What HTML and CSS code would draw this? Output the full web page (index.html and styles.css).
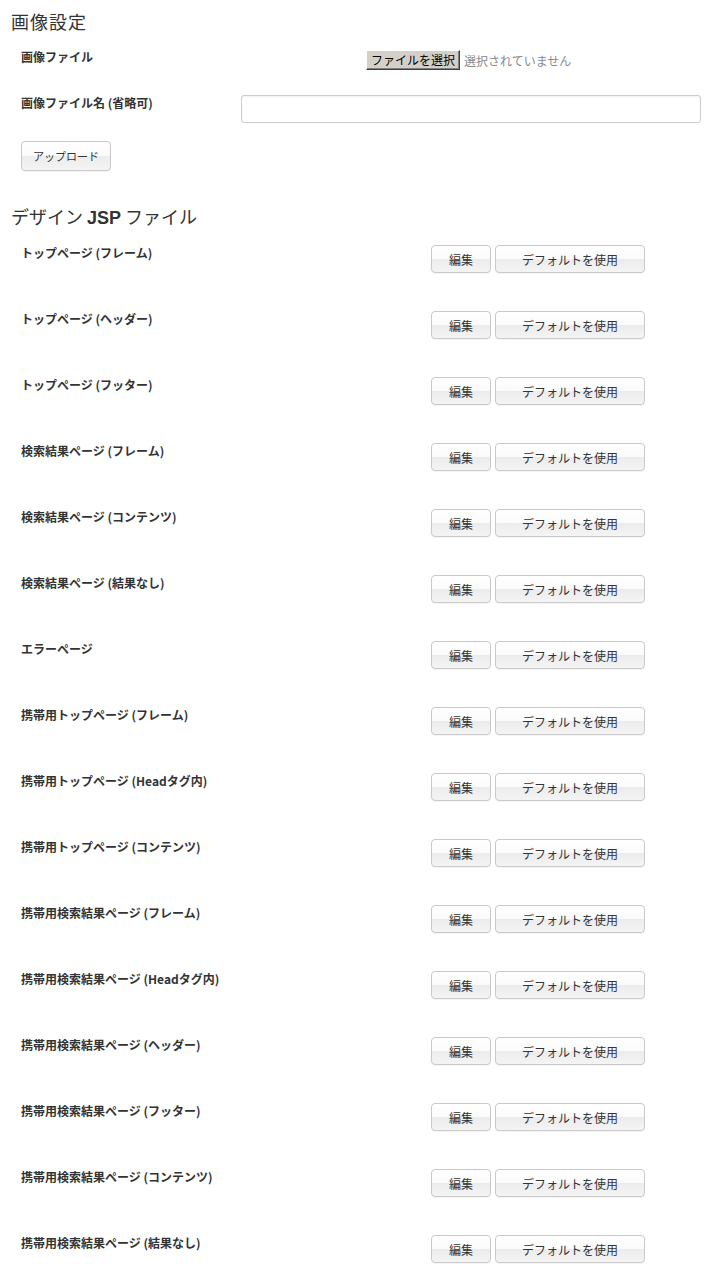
FILE: index.html
```html
<!DOCTYPE html>
<html lang="ja">
<head>
<meta charset="utf-8">
<title>画像設定</title>
<link rel="stylesheet" href="styles.css">
</head>
<body>
<div class="page">
  <section class="block">
    <h2 class="title first-title">画像設定</h2>
    <div class="field-row first">
      <div class="label">画像ファイル</div>
      <div class="file-field">
        <button class="file-btn" type="button">ファイルを選択</button>
        <span class="file-none">選択されていません</span>
      </div>
    </div>
    <div class="field-row second">
      <div class="label">画像ファイル名 (省略可)</div>
      <input class="text-input" type="text">
    </div>
    <div class="field-row third">
      <button class="btn btn-upload" type="button">アップロード</button>
    </div>
  </section>

  <section class="block">
    <h2 class="title jsp-title">デザイン <b>JSP</b> ファイル</h2>
    <div class="jsp-list">
      <div class="jsp-row"><div class="jsp-label">トップページ (フレーム)</div><div class="actions"><button class="btn btn-edit">編集</button><button class="btn btn-default">デフォルトを使用</button></div></div>
      <div class="jsp-row"><div class="jsp-label">トップページ (ヘッダー)</div><div class="actions"><button class="btn btn-edit">編集</button><button class="btn btn-default">デフォルトを使用</button></div></div>
      <div class="jsp-row"><div class="jsp-label">トップページ (フッター)</div><div class="actions"><button class="btn btn-edit">編集</button><button class="btn btn-default">デフォルトを使用</button></div></div>
      <div class="jsp-row"><div class="jsp-label">検索結果ページ (フレーム)</div><div class="actions"><button class="btn btn-edit">編集</button><button class="btn btn-default">デフォルトを使用</button></div></div>
      <div class="jsp-row"><div class="jsp-label">検索結果ページ (コンテンツ)</div><div class="actions"><button class="btn btn-edit">編集</button><button class="btn btn-default">デフォルトを使用</button></div></div>
      <div class="jsp-row"><div class="jsp-label">検索結果ページ (結果なし)</div><div class="actions"><button class="btn btn-edit">編集</button><button class="btn btn-default">デフォルトを使用</button></div></div>
      <div class="jsp-row"><div class="jsp-label">エラーページ</div><div class="actions"><button class="btn btn-edit">編集</button><button class="btn btn-default">デフォルトを使用</button></div></div>
      <div class="jsp-row"><div class="jsp-label">携帯用トップページ (フレーム)</div><div class="actions"><button class="btn btn-edit">編集</button><button class="btn btn-default">デフォルトを使用</button></div></div>
      <div class="jsp-row"><div class="jsp-label">携帯用トップページ (Headタグ内)</div><div class="actions"><button class="btn btn-edit">編集</button><button class="btn btn-default">デフォルトを使用</button></div></div>
      <div class="jsp-row"><div class="jsp-label">携帯用トップページ (コンテンツ)</div><div class="actions"><button class="btn btn-edit">編集</button><button class="btn btn-default">デフォルトを使用</button></div></div>
      <div class="jsp-row"><div class="jsp-label">携帯用検索結果ページ (フレーム)</div><div class="actions"><button class="btn btn-edit">編集</button><button class="btn btn-default">デフォルトを使用</button></div></div>
      <div class="jsp-row"><div class="jsp-label">携帯用検索結果ページ (Headタグ内)</div><div class="actions"><button class="btn btn-edit">編集</button><button class="btn btn-default">デフォルトを使用</button></div></div>
      <div class="jsp-row"><div class="jsp-label">携帯用検索結果ページ (ヘッダー)</div><div class="actions"><button class="btn btn-edit">編集</button><button class="btn btn-default">デフォルトを使用</button></div></div>
      <div class="jsp-row"><div class="jsp-label">携帯用検索結果ページ (フッター)</div><div class="actions"><button class="btn btn-edit">編集</button><button class="btn btn-default">デフォルトを使用</button></div></div>
      <div class="jsp-row"><div class="jsp-label">携帯用検索結果ページ (コンテンツ)</div><div class="actions"><button class="btn btn-edit">編集</button><button class="btn btn-default">デフォルトを使用</button></div></div>
      <div class="jsp-row"><div class="jsp-label">携帯用検索結果ページ (結果なし)</div><div class="actions"><button class="btn btn-edit">編集</button><button class="btn btn-default">デフォルトを使用</button></div></div>
    </div>
  </section>
</div>
</body>
</html>
```

FILE: styles.css
```css
html, body {
  margin: 0;
  padding: 0;
  background: #fff;
}

body {
  font-family: "Noto Sans CJK JP", "Liberation Sans", sans-serif;
  color: #333;
}

.page {
  padding: 8px 14px 0 11px;
}

.title {
  margin: 0;
  font-size: 18px;
  font-weight: normal;
  line-height: 26px;
  color: #333;
}

.first-title {
  letter-spacing: 1px;
}

.title b {
  font-family: "Liberation Sans", sans-serif;
  font-weight: bold;
}

.field-row {
  display: flex;
  align-items: flex-start;
  padding-left: 10px;
}

.field-row.first { margin-top: 15px; }
.field-row.second { margin-top: 25px; }
.field-row.third { margin-top: 18px; }

.label {
  width: 220px;
  flex: none;
  font-size: 12px;
  font-weight: bold;
  line-height: 16px;
}

.file-field {
  display: flex;
  align-items: center;
  padding-left: 125px;
  margin-top: 1px;
}

.file-btn {
  box-sizing: border-box;
  width: 94px;
  height: 20px;
  padding: 0;
  margin: 0;
  font-family: "Noto Sans CJK JP", sans-serif;
  font-size: 12px;
  line-height: 16px;
  color: #000;
  background: #d4d0c8;
  border: 1px solid;
  border-color: #fff #404040 #404040 #fff;
  box-shadow: inset -1px -1px 0 #808080;
}

.file-none {
  margin-left: 4px;
  font-size: 12px;
  color: #888;
}

.text-input {
  box-sizing: border-box;
  width: 460px;
  height: 28px;
  margin: 0;
  border: 1px solid #ccc;
  border-radius: 3px;
  box-shadow: inset 0 1px 2px rgba(0, 0, 0, 0.06);
  background: #fff;
}

.btn {
  box-sizing: border-box;
  margin: 0;
  padding: 0;
  font-family: "Noto Sans CJK JP", sans-serif;
  color: #333;
  border: 1px solid #c9c9c9;
  border-radius: 4px;
  background: linear-gradient(to bottom, #ffffff 0%, #fbfbfb 48%, #ececec 52%, #f4f4f4 100%);
  box-shadow: 0 1px 0 rgba(0, 0, 0, 0.04);
}

.btn-upload {
  width: 90px;
  height: 30px;
  font-size: 11px;
}

.jsp-title {
  margin-top: 32px;
}

.jsp-list {
  margin-top: 14px;
}

.jsp-row {
  display: flex;
  align-items: flex-start;
  height: 66px;
  padding-left: 10px;
}

.jsp-label {
  width: 410px;
  flex: none;
  font-size: 12px;
  font-weight: bold;
  line-height: 16px;
  margin-top: 0;
}

.actions {
  display: flex;
  gap: 4px;
}

.btn-edit,
.btn-default {
  height: 28px;
  font-size: 12px;
}

.btn-edit { width: 60px; }
.btn-default { width: 150px; }
```
